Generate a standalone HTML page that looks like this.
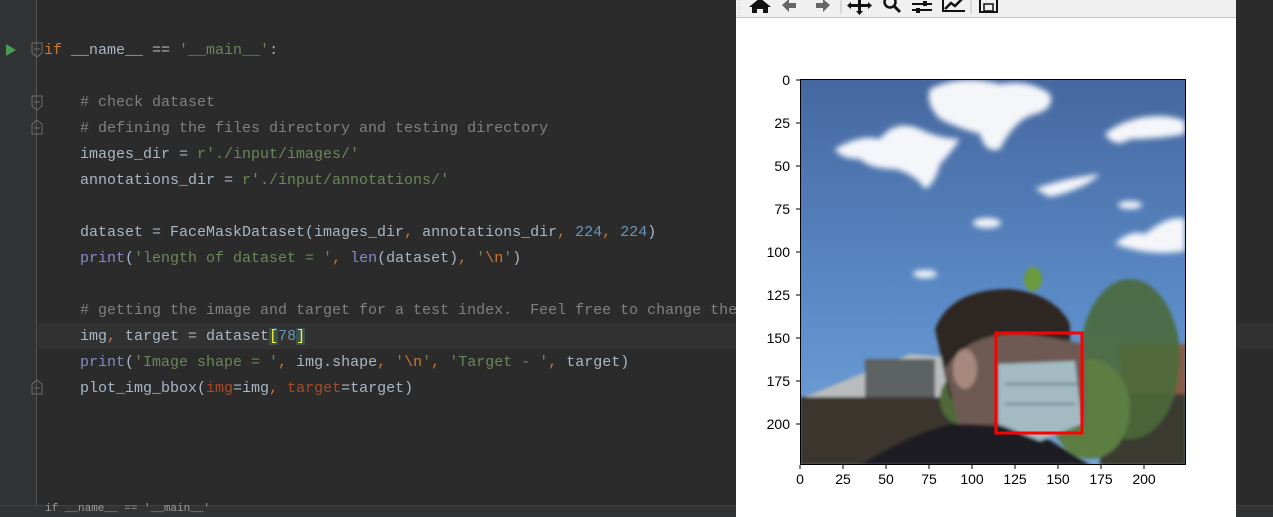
<!DOCTYPE html>
<html><head><style>
*{margin:0;padding:0;box-sizing:border-box}
body{width:1273px;height:517px;overflow:hidden;background:#2b2b2b;position:relative;font-family:"Liberation Mono",monospace}
.gut{position:absolute;left:0;top:0;width:37px;height:505px;background:#313335;border-right:1px solid #555}
.hl{position:absolute;left:38px;top:323px;width:1235px;height:26px;background:#323232}
.ln{position:absolute;left:0;font-size:15px;color:#a9b7c6;white-space:pre;line-height:26px;height:26px}
.k{color:#cc7832}.s{color:#6a8759}.c{color:#808080}.n{color:#6897bb}.b{color:#8888c6}.p{color:#aa4926}
.br{color:#ffef28;background:#3b514d}
.status{position:absolute;left:0;top:505px;width:1273px;height:12px;background:#313335;border-top:1px solid #3e4042}
.fig{position:absolute;left:736px;top:0;width:500px;height:517px;background:#fff}
.tb{position:absolute;left:0;top:0;width:500px;height:18px;background:#f0f0f0;border-bottom:1px solid #c6c6c6}
.yl{position:absolute;font-family:"Liberation Sans",sans-serif;font-size:14px;color:#000;text-align:right;width:40px;left:14px}
.xl{position:absolute;font-family:"Liberation Sans",sans-serif;font-size:14px;color:#000;text-align:center;width:40px;top:471px}
</style></head><body>
<div class="gut"></div>
<div class="hl"></div>
<svg style="position:absolute;left:0;top:0" width="60" height="400">
<polygon points="6,44 16,50 6,56" fill="#499c54"/>
<g fill="none" stroke="#6b6b6b" stroke-width="1">
<path d="M32,43h10v10l-5,4l-5,-4z"/><path d="M34,49h6"/>
<path d="M32,96h10v10l-5,4l-5,-4z"/><path d="M34,102h6"/>
<path d="M32,134h10v-10l-5,-4l-5,4z"/><path d="M34,128h6"/>
<path d="M32,394h10v-10l-5,-4l-5,4z"/><path d="M34,388h6"/>
</g></svg>
<div class="ln" style="left:44px;top:38px"><span class="k">if</span> __name__ == <span class="s">'__main__'</span>:</div>
<div class="ln" style="left:80px;top:90px"><span class="c"># check dataset</span></div>
<div class="ln" style="left:80px;top:116px"><span class="c"># defining the files directory and testing directory</span></div>
<div class="ln" style="left:80px;top:142px">images_dir = <span class="s">r'./input/images/'</span></div>
<div class="ln" style="left:80px;top:168px">annotations_dir = <span class="s">r'./input/annotations/'</span></div>
<div class="ln" style="left:80px;top:220px">dataset = FaceMaskDataset(images_dir<span class="k">,</span> annotations_dir<span class="k">,</span> <span class="n">224</span><span class="k">,</span> <span class="n">224</span>)</div>
<div class="ln" style="left:80px;top:246px"><span class="b">print</span>(<span class="s">'length of dataset = '</span><span class="k">,</span> <span class="b">len</span>(dataset)<span class="k">,</span> <span class="s">'</span><span class="k">\n</span><span class="s">'</span>)</div>
<div class="ln" style="left:80px;top:298px"><span class="c"># getting the image and target for a test index.  Feel free to change the</span></div>
<div class="ln" style="left:80px;top:324px">img<span class="k">,</span> target = dataset<span class="br">[</span><span class="n">78</span><span class="br">]</span></div>
<div class="ln" style="left:80px;top:350px"><span class="b">print</span>(<span class="s">'Image shape = '</span><span class="k">,</span> img.shape<span class="k">,</span> <span class="s">'</span><span class="k">\n</span><span class="s">'</span><span class="k">,</span> <span class="s">'Target - '</span><span class="k">,</span> target)</div>
<div class="ln" style="left:80px;top:376px">plot_img_bbox(<span class="p">img</span>=img<span class="k">,</span> <span class="p">target</span>=target)</div>
<div class="status"><span style="position:absolute;left:45px;top:-3px;font-size:11px;color:#999">if __name__ == '__main__'</span></div>
<div class="fig">
<div class="tb"></div>
<svg style="position:absolute;left:0;top:0" width="500" height="18">
<g fill="#111">
<path d="M24,-2l11,9h-3v6h-5v-4h-6v4h-5v-6h-3z"/>
<path d="M46,5l7,-6v4h7v5h-7v4z" fill="#666"/>
<path d="M94,5l-7,-6v4h-7v5h7v4z" fill="#666"/>
<path d="M122,-2h3v6h7v-2l4,3.5l-4,3.5v-2h-7v4h2l-3.5,4l-3.5,-4h2v-4h-7v2l-4,-3.5l4,-3.5v2h7z"/>
</g>
<circle cx="154" cy="2" r="5.5" fill="none" stroke="#111" stroke-width="2.5"/>
<path d="M158,6l6,6" stroke="#111" stroke-width="3"/>
<g stroke="#111" stroke-width="2"><path d="M176,4h20M176,10h20"/></g>
<rect x="187" y="1" width="4" height="5" fill="#111"/><rect x="180" y="8" width="4" height="5" fill="#111"/>
<path d="M207,-2v13h22" stroke="#111" stroke-width="2" fill="none"/>
<path d="M209,9l6,-6l4,3l7,-7" stroke="#111" stroke-width="2.5" fill="none"/>
<rect x="244" y="-2" width="17" height="14" fill="none" stroke="#111" stroke-width="2"/>
<rect x="248" y="4" width="9" height="7" fill="none" stroke="#111" stroke-width="1.5"/>
<path d="M105,0v14M235,0v14" stroke="#c0c0c0"/>
<path d="M3,0v16" stroke="#bbb" stroke-dasharray="1,2"/>
</svg>
</div>
<svg style="position:absolute;left:800px;top:79px" width="386" height="386">
<defs>
<linearGradient id="sky" x1="0" y1="0" x2="0" y2="1"><stop offset="0" stop-color="#46679f"/><stop offset="0.6" stop-color="#5b8cc8"/><stop offset="1" stop-color="#75a4d8"/></linearGradient>
<filter id="bl"><feGaussianBlur stdDeviation="3"/></filter>
<filter id="b2"><feGaussianBlur stdDeviation="1.5"/></filter>
</defs>
<rect width="386" height="386" fill="url(#sky)"/>
<g fill="#f4f6fa" filter="url(#bl)">
<path d="M130,10 Q160,-5 200,5 Q230,0 250,15 Q255,30 235,35 Q215,40 200,70 Q185,75 180,55 Q160,50 140,40 Q125,25 130,10Z"/>
<path d="M35,70 Q60,55 80,60 Q95,40 120,50 Q140,60 160,60 Q150,75 140,85 Q135,105 125,110 Q115,95 95,90 Q70,90 60,80 Q40,80 35,70Z"/>
<path d="M305,55 Q320,42 345,38 Q370,35 385,42 L385,55 Q360,60 330,60 Q315,70 305,55Z"/>
<path d="M235,110 Q260,100 300,95 Q285,110 250,118 Z"/>
<path d="M315,165 Q330,150 345,155 Q370,135 385,140 L385,172 Q350,178 315,165Z"/>
<ellipse cx="187" cy="144" rx="14" ry="5"/><ellipse cx="125" cy="195" rx="12" ry="4"/><ellipse cx="330" cy="126" rx="12" ry="4"/>
</g>
<g filter="url(#b2)">
<polygon points="0,320 110,275 170,280 170,330 0,330" fill="#b9bcbd"/>
<rect x="65" y="280" width="70" height="40" fill="#5d6264"/>
<rect x="0" y="318" width="170" height="68" fill="#3a342f"/>
<rect x="320" y="265" width="66" height="55" fill="#8a5a4a"/>
<rect x="300" y="315" width="86" height="71" fill="#3b3a30"/>
<ellipse cx="330" cy="280" rx="50" ry="80" fill="#4a6a3a" opacity="0.9"/>
<ellipse cx="290" cy="330" rx="40" ry="50" fill="#5c7e43"/>
<ellipse cx="160" cy="320" rx="20" ry="25" fill="#4f6b38"/>
<ellipse cx="233" cy="200" rx="9" ry="12" fill="#6a9a3a"/>
<path d="M135,250 Q150,210 210,210 Q255,215 270,245 L270,290 L150,320 Z" fill="#2e2522"/>
<path d="M145,290 Q170,250 230,255 L285,265 L285,345 L220,370 L160,350 Z" fill="#6e5a52"/>
<ellipse cx="165" cy="290" rx="12" ry="20" fill="#a6887b"/>
<path d="M60,386 Q110,355 150,345 Q220,345 240,355 L290,386 Z" fill="#1b1d23"/>
<path d="M198,285 L275,282 L282,345 L240,362 L198,345 Z" fill="#a3bac3"/>
<path d="M205,305h72M205,325h70" stroke="#7f97a3" stroke-width="3"/>
</g>
<rect x="196" y="254" width="86" height="100" fill="none" stroke="#f00" stroke-width="3"/>
<rect x="0.5" y="0.5" width="385" height="385" fill="none" stroke="#000"/>
</svg>
<svg style="position:absolute;left:790px;top:70px" width="410" height="410">
<g stroke="#000" stroke-width="1">
<path d="M6,10h4M6,53h4M6,96h4M6,139h4M6,182h4M6,225h4M6,268h4M6,311h4M6,354h4"/>
<path d="M10,395v4M53,395v4M96,395v4M139,395v4M182,395v4M225,395v4M268,395v4M311,395v4M354,395v4"/>
</g></svg>
<div class="yl" style="left:750px;top:72px">0</div>
<div class="yl" style="left:750px;top:115px">25</div>
<div class="yl" style="left:750px;top:158px">50</div>
<div class="yl" style="left:750px;top:201px">75</div>
<div class="yl" style="left:750px;top:244px">100</div>
<div class="yl" style="left:750px;top:287px">125</div>
<div class="yl" style="left:750px;top:330px">150</div>
<div class="yl" style="left:750px;top:373px">175</div>
<div class="yl" style="left:750px;top:416px">200</div>
<div class="xl" style="left:780px">0</div>
<div class="xl" style="left:823px">25</div>
<div class="xl" style="left:866px">50</div>
<div class="xl" style="left:909px">75</div>
<div class="xl" style="left:952px">100</div>
<div class="xl" style="left:995px">125</div>
<div class="xl" style="left:1038px">150</div>
<div class="xl" style="left:1081px">175</div>
<div class="xl" style="left:1124px">200</div>
</body></html>
